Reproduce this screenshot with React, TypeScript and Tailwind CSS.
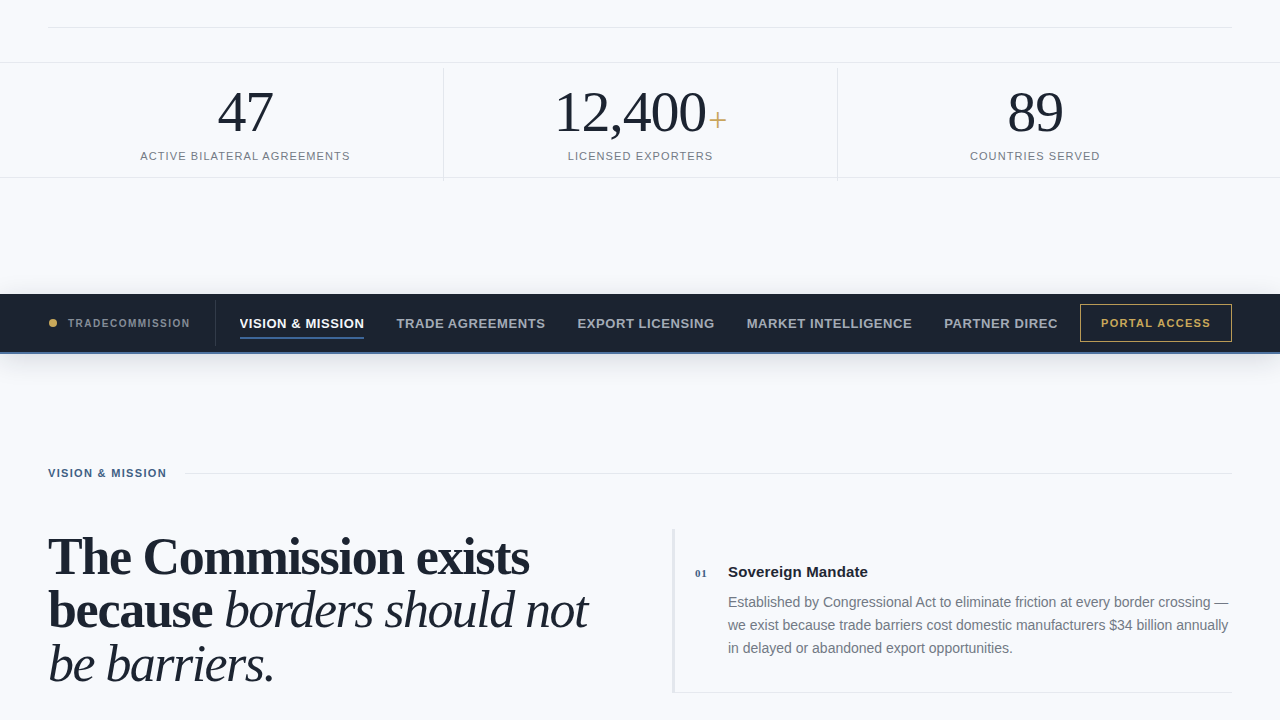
import React from "react";

const serif = "font-['Liberation_Serif','Times_New_Roman',serif]";
const sans = "font-['Liberation_Sans',Arial,sans-serif]";

const stats = [
  { value: "47", suffix: "", label: "Active Bilateral Agreements" },
  { value: "12,400", suffix: "+", label: "Licensed Exporters" },
  { value: "89", suffix: "", label: "Countries Served" },
];

const links = [
  "Vision & Mission",
  "Trade Agreements",
  "Export Licensing",
  "Market Intelligence",
  "Partner Directory",
];

export default function App() {
  return (
    <div className={`min-h-[720px] bg-[#f7f9fc] text-[#1c2431] ${sans}`}>
      {/* tail of the hero block */}
      <div className="mx-12 h-[28px] border-b border-[#e4e8ee]" />

      {/* stats band */}
      <div className="mt-[34px] border-y border-[#e6e9ef]">
        <div className="mx-12 -mb-[4px] mt-[5px] grid grid-cols-3">
          {stats.map((s, i) => (
            <div
              key={s.label}
              className={`flex flex-col items-center pt-[12px] pb-[18px] ${i > 0 ? "border-l border-[#e3e7ed]" : ""}`}
            >
              <div className="flex items-baseline">
                <span className={`${serif} text-[58px] leading-[64px] tracking-[-0.02em] text-[#1c2431]`}>
                  {s.value}
                </span>
                {s.suffix && (
                  <span className={`${serif} ml-[2px] text-[34px] leading-none text-[#c9a55c]`}>{s.suffix}</span>
                )}
              </div>
              <div className="mt-[5px] text-[11px] uppercase leading-[14px] tracking-[0.1em] text-[#737a85]">
                {s.label}
              </div>
            </div>
          ))}
        </div>
      </div>

      <nav className="mt-[116px] border-b-2 border-[#4f73a0] bg-[#1b2330] shadow-[0_6px_28px_rgba(20,30,50,0.14)]">
        <div className="mx-12 flex h-[58px] items-center">
          <div className="flex items-center pr-6">
            <span className="ml-[1px] h-[8px] w-[8px] rounded-full bg-[#c9a85a]" />
            <span className="ml-[11px] pt-px text-[10px] font-bold uppercase tracking-[0.15em] text-[#858d98]">
              TradeCommission
            </span>
          </div>
          <div className="h-[46px] w-px bg-[#323b49]" />
          <div className="ml-6 flex h-full min-w-0 flex-1 items-center gap-8 overflow-hidden">
            {links.map((l, i) => (
              <span
                key={l}
                className={`relative shrink-0 whitespace-nowrap pt-[2px] text-[13px] font-bold uppercase tracking-[0.045em] ${i === 0 ? "text-[#f4f6f9]" : "text-[#a3abb6]"}`}
              >
                {l}
                {i === 0 && (
                  <span className="absolute left-0 right-0 top-[25px] h-[2px] bg-[#3d6699]" />
                )}
              </span>
            ))}
          </div>
          <button className="ml-[23px] flex h-[38px] w-[152px] shrink-0 items-center justify-center border border-[#b99a55] pt-px text-[11px] font-bold uppercase tracking-[0.12em] text-[#c9a85a]">
            Portal Access
          </button>
        </div>
      </nav>

      {/* vision & mission */}
      <section className="mx-12 pt-[111px]">
        <div className="flex items-center">
          <span className="text-[11px] font-bold uppercase tracking-[0.12em] text-[#3f5f84]">Vision &amp; Mission</span>
          <span className="ml-[18px] h-px flex-1 bg-[#e4e8ee]" />
        </div>

        <div className="mt-[47px] grid grid-cols-2 gap-16">
          <h2 className={`${serif} pt-[1px] text-[52px] font-bold leading-[53.5px] tracking-[-0.025em] text-[#1c2431]`}>
            The Commission exists because{" "}
            <em className="font-normal italic tracking-[-0.03em]">borders should not be barriers.</em>
          </h2>

          <div className="border-l-[3px] border-[#e3e7ed]">
            <div className="flex border-b border-[#e6e9ef] pb-[32px] pl-5 pt-[34px]">
              <span className={`${serif} w-[33px] pt-[3px] text-[11px] font-bold leading-[15px] tracking-[0.06em] text-[#3f5f84]`}>
                01
              </span>
              <div className="flex-1">
                <h3 className="text-[15px] font-bold leading-[18px] tracking-[0.01em] text-[#1f2734]">Sovereign Mandate</h3>
                <p className="mt-[10px] text-[14px] leading-[23px] text-[#727985]">
                  Established by Congressional Act to eliminate friction at every border crossing — we exist because trade
                  barriers cost domestic manufacturers $34 billion annually in delayed or abandoned export opportunities.
                </p>
              </div>
            </div>
          </div>
        </div>
      </section>
    </div>
  );
}
